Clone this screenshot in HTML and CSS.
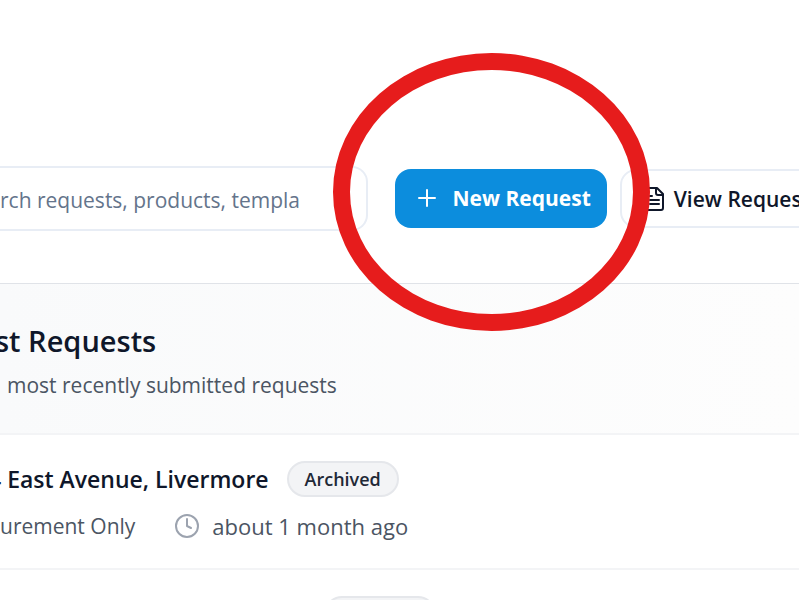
FILE: index.html
```
<!DOCTYPE html>
<html lang="en">

<head>
  <meta charset="UTF-8">
  <meta name="viewport" content="width=device-width, initial-scale=1.0">
  <title>Requests</title>
  <link rel="stylesheet" href="styles.css">
</head>

<body>
  <header class="toolbar">
    <input class="search" type="text" aria-label="Search requests" placeholder="rch requests, products, templa">
    <div class="actions">
      <div class="highlight">
        <button class="btn btn-primary" type="button">
          <svg class="icon" viewBox="0 0 24 24"><path d="M4 12h16M12 4v16" /></svg>
          New Request
        </button>
        <span class="ring"></span>
      </div>
      <button class="btn btn-outline" type="button">
        <svg class="icon" viewBox="0 0 24 24">
          <path d="M15 1H6a2 2 0 0 0-2 2v18a2 2 0 0 0 2 2h13a2 2 0 0 0 2-2V7z" />
          <path d="M14 1v5a2 2 0 0 0 2 2h5M10 9H8M17 13H8M17 17H8" />
        </svg>
        View Requests
      </button>
    </div>
  </header>

  <main>
    <section class="section-header">
      <h1>st Requests</h1>
      <p>most recently submitted requests</p>
    </section>

    <article class="request">
      <div class="request-title">
        <h2>4 East Avenue, Livermore</h2>
        <span class="badge">Archived</span>
      </div>
      <div class="request-meta">
        <span>urement Only</span>
        <span class="time">
          <svg class="icon" viewBox="0 0 24 24"><circle cx="12" cy="12" r="11" /><path d="M12 5v7l4 2" /></svg>
          about 1 month ago
        </span>
      </div>
    </article>

    <article class="request request-next">
      <span class="badge">Archived</span>
    </article>
  </main>
</body>

</html>
```
FILE: styles.css
```
* {
  box-sizing: border-box;
}

body {
  font-family: "Open Sans", "Noto Sans", sans-serif;
  font-size: 21px;
  line-height: 32px;
  margin: 0;
  height: 100vh;
  overflow: hidden; /* the list runs past the window */
  background-color: #fff;
  color: #0f172a;
  white-space: nowrap;
}

h1,
h2,
p {
  margin: 0;
}

.icon {
  width: 24px;
  height: 24px;
  flex: none;
  fill: none;
  stroke: currentColor;
  stroke-width: 2;
  stroke-linecap: round;
  stroke-linejoin: round;
}

/* Toolbar */
.toolbar {
  display: flex;
  align-items: center;
  gap: 27px;
  padding: 166px 0 52px;
  border-bottom: 1px solid #e0e3e8;
}

.search {
  flex: 0 0 46%;
  min-width: 0;
  height: 65px;
  padding: 2px 0 0;
  border: 2px solid #e8edf5;
  border-left: 0;
  border-radius: 0 16px 16px 0;
  background-color: #fff;
  font: inherit;
}

.search::placeholder {
  color: #64748b;
  opacity: 1;
}

.actions {
  display: flex;
  flex: none;
  gap: 13px;
}

.btn {
  display: flex;
  align-items: center;
  height: 59px;
  border-radius: 16px;
  font: inherit;
  font-weight: 600;
}

.btn-primary {
  gap: 14px;
  padding: 0 16px 2px 20px;
  border: 0;
  background-color: #0c8ddd;
  color: #fff;
  font-weight: 700;
}

.btn-outline {
  gap: 8px;
  padding: 0 20px;
  border: 2px solid #e8edf5;
  background-color: #fff;
  color: #0f172a;
}

.highlight {
  position: relative;
}

/* Marker drawn over the button */
.ring {
  position: absolute;
  z-index: 1;
  top: -116px;
  right: -43px;
  bottom: -103px;
  left: -62px;
  border: 17px solid #e61c1c;
  border-radius: 50%;
  pointer-events: none;
}

/* List */
.section-header {
  padding: 37px 7px 32px;
  border-bottom: 2px solid #f3f4f6;
  background: linear-gradient(to right, #f9fafb, #fdfdfd);
}

.section-header h1 {
  margin-left: -12px;
  font-size: 29px;
  font-weight: 600;
  line-height: 40px;
}

.section-header p {
  margin-top: 8px;
  color: #4b5563;
}

.request {
  padding: 26px 0;
  border-bottom: 2px solid #f3f4f6;
}

.request-title {
  display: flex;
  align-items: center;
  gap: 18px;
  margin-left: -12px;
}

.request-title h2 {
  font-size: 23px;
  font-weight: 600;
}

.badge {
  display: inline-block;
  padding: 0 16px;
  border: 2px solid #e5e7eb;
  border-radius: 18px;
  background-color: #f3f4f6;
  color: #1f2937;
  font-size: 18px;
  font-weight: 600;
}

.request-meta {
  display: flex;
  gap: 40px;
  margin-top: 13px;
  color: #4b5563;
}

.time {
  display: flex;
  align-items: center;
  gap: 13px;
  font-size: 22px;
}

.time .icon {
  color: #9ca3af;
}

.request-next {
  padding-left: 324px;
}
```
